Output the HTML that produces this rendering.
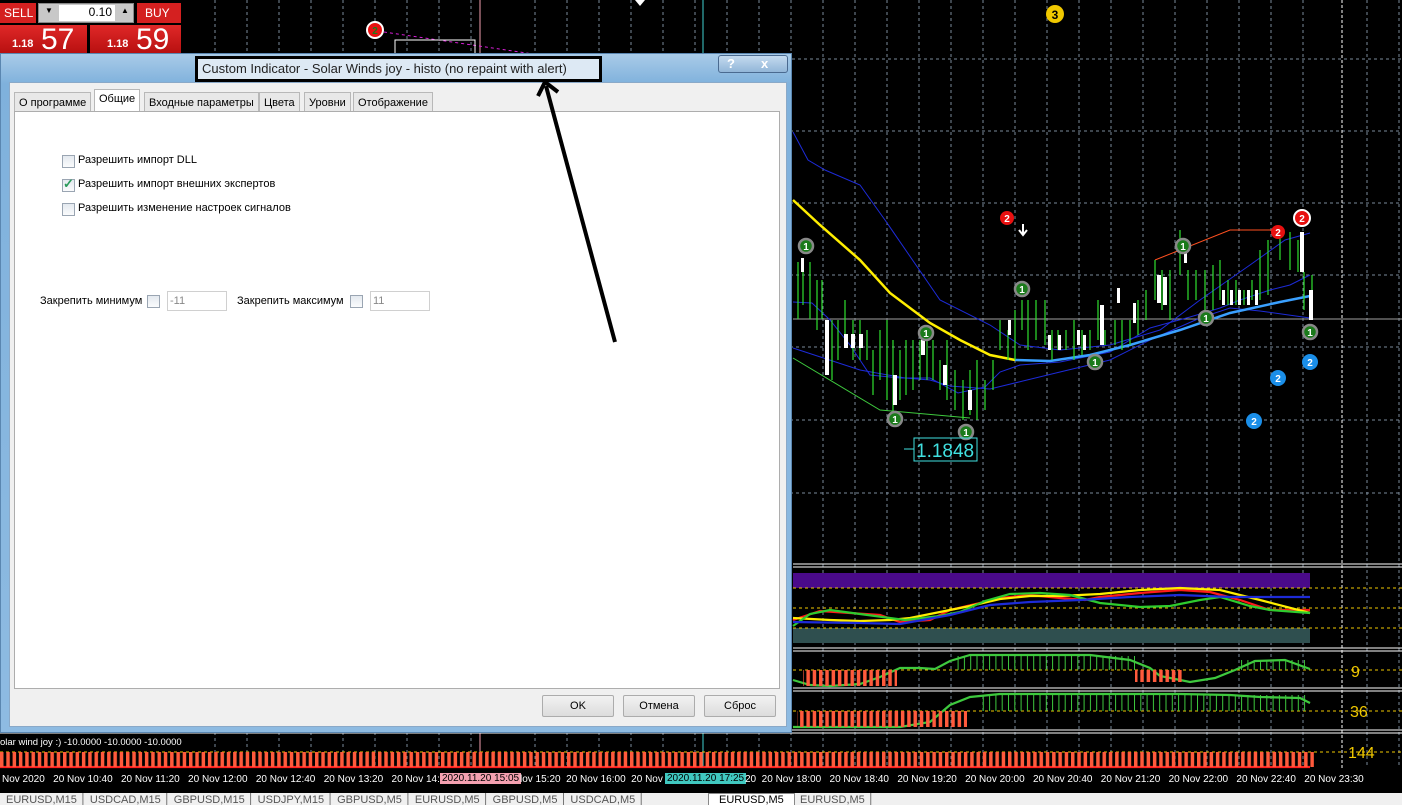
<!DOCTYPE html>
<html><head><meta charset="utf-8"><style>
*{margin:0;padding:0;box-sizing:border-box}
body{width:1402px;height:805px;background:#000;position:relative;overflow:hidden;font-family:"Liberation Sans",sans-serif}
.abs{position:absolute}
.dlg{left:0;top:53px;width:792px;height:680px;background:linear-gradient(180deg,#a9cbe8 0,#7fb1dc 30px,#8ebbe2 100%);border:1px solid #5a86b0}
.body{position:absolute;left:8px;top:28px;width:778px;height:645px;background:#f0f0f0;border:1px solid #8aa9c8}
.tab{position:absolute;top:9px;height:20px;font-size:11px;color:#000;border:1px solid #b8b8b8;border-bottom:none;background:#e8e8e8;padding:4px 4px 0 4px;white-space:nowrap}
.panel{position:absolute;left:4px;top:28px;width:766px;height:578px;background:#fff;border:1px solid #adadad}
.cb{position:absolute;width:13px;height:13px;border:1px solid #9aa5b2;background:linear-gradient(#e4e9ef,#fafbfc)}
.lbl{position:absolute;font-size:11px;color:#000;white-space:nowrap}
.inp{position:absolute;width:60px;height:20px;border:1px solid #d0d0d0;background:#fff;font-size:11px;color:#888;padding:3px 2px}
.btn{position:absolute;top:612px;width:72px;height:22px;border:1px solid #acacac;border-radius:2px;background:linear-gradient(#f2f2f2,#dcdcdc);font-size:11px;text-align:center;line-height:20px}
.tl{font-size:10px;color:#fff;white-space:nowrap}
</style></head><body>
<svg class="abs" style="left:0;top:0" width="1402" height="805">
<defs>
<pattern id="rb" width="6.3" height="20" patternUnits="userSpaceOnUse"><rect x="0" y="0" width="3.5" height="20" fill="#ff5a3c"/></pattern>
<pattern id="gb" width="6.3" height="60" patternUnits="userSpaceOnUse"><rect x="0" y="0" width="1" height="60" fill="#3ec93e"/></pattern>
</defs>
<g stroke="#7a8a9a" stroke-dasharray="3,3" stroke-width="1">
<line x1="215" y1="0" x2="215" y2="768"/><line x1="247" y1="0" x2="247" y2="768"/><line x1="279" y1="0" x2="279" y2="768"/><line x1="311" y1="0" x2="311" y2="768"/><line x1="343" y1="0" x2="343" y2="768"/><line x1="375" y1="0" x2="375" y2="768"/><line x1="407" y1="0" x2="407" y2="768"/><line x1="439" y1="0" x2="439" y2="768"/><line x1="471" y1="0" x2="471" y2="768"/><line x1="535" y1="0" x2="535" y2="768"/><line x1="567" y1="0" x2="567" y2="768"/><line x1="599" y1="0" x2="599" y2="768"/><line x1="631" y1="0" x2="631" y2="768"/><line x1="663" y1="0" x2="663" y2="768"/><line x1="695" y1="0" x2="695" y2="768"/><line x1="727" y1="0" x2="727" y2="768"/><line x1="759" y1="0" x2="759" y2="768"/><line x1="791" y1="0" x2="791" y2="768"/><line x1="823" y1="0" x2="823" y2="768"/><line x1="855" y1="0" x2="855" y2="768"/><line x1="887" y1="0" x2="887" y2="768"/><line x1="919" y1="0" x2="919" y2="768"/><line x1="951" y1="0" x2="951" y2="768"/><line x1="983" y1="0" x2="983" y2="768"/><line x1="1015" y1="0" x2="1015" y2="768"/><line x1="1047" y1="0" x2="1047" y2="768"/><line x1="1079" y1="0" x2="1079" y2="768"/><line x1="1111" y1="0" x2="1111" y2="768"/><line x1="1143" y1="0" x2="1143" y2="768"/><line x1="1175" y1="0" x2="1175" y2="768"/><line x1="1207" y1="0" x2="1207" y2="768"/><line x1="1239" y1="0" x2="1239" y2="768"/><line x1="1271" y1="0" x2="1271" y2="768"/><line x1="1303" y1="0" x2="1303" y2="768"/><line x1="1367" y1="0" x2="1367" y2="768"/><line x1="1399" y1="0" x2="1399" y2="768"/>
<line x1="180" y1="59" x2="1402" y2="59"/><line x1="790" y1="131" x2="1402" y2="131"/><line x1="790" y1="203" x2="1402" y2="203"/><line x1="790" y1="275" x2="1402" y2="275"/><line x1="790" y1="347" x2="1402" y2="347"/><line x1="790" y1="420" x2="1402" y2="420"/><line x1="790" y1="493" x2="1402" y2="493"/>
</g>
<line x1="1342" y1="0" x2="1342" y2="768" stroke="#fff" stroke-dasharray="3,2"/>
<line x1="480" y1="0" x2="480" y2="768" stroke="#f4a0b0"/>
<line x1="703" y1="0" x2="703" y2="768" stroke="#40d0d0"/>
<line x1="793" y1="319" x2="1402" y2="319" stroke="#a0a0a0"/>
<path d="M793 132 L808 160 L825 170 L860 185 L885 220 L940 300 L990 325 L1020 345 L1060 350 L1110 345 L1160 330 L1200 300 L1250 265 L1285 240 L1310 233" fill="none" stroke="#1d2bd8"/>
<path d="M793 302 L812 303 L830 320 L850 345 L870 375 L900 378 L930 378 L958 393 L985 387 L1000 372 L1020 365 L1060 362 L1110 352 L1150 328 L1190 317 L1220 308 L1240 300 L1270 290 L1290 285 L1310 275" fill="none" stroke="#1d2bd8"/>
<path d="M793 348 L860 370 L905 378 L930 380 L950 386 L990 389 L1060 372 L1110 360 L1150 340 L1200 318 L1230 308 L1260 311 L1310 318" fill="none" stroke="#1d2bd8"/>
<path d="M793 200 L820 225 L860 260 L890 293 L930 323 L960 340 L990 355 L1015 360" fill="none" stroke="#ffee00" stroke-width="2.5"/>
<path d="M1015 360 L1050 361 L1090 355 L1130 345 L1180 330 L1230 313 L1280 302 L1310 296" fill="none" stroke="#3aa0ff" stroke-width="2.5"/>
<path d="M793 358 L880 410 L970 418" fill="none" stroke="#3ec93e"/>
<path d="M1155 260 L1230 230 L1280 230" fill="none" stroke="#ff5020"/>
<g stroke="#2fe02f" fill="none" stroke-width="1.2">
<path d="M798 262V319M803 272V305M810 262V319M817 280V330M822 280V319M832 320V380M838 320V360M845 300V345M853 320V360M860 320V360M867 330V360M873 350V395M880 330V380M887 320V400M893 340V420M900 350V400M906 340V395M913 340V390M920 340V380M927 330V380M933 340V380M940 360V390M947 340V400M955 370V410M963 380V420M970 370V415M977 360V420M985 380V410M993 360V390M1000 320V350M1008 330V360M1015 310V360M1022 300V330M1028 300V350M1036 300V340M1045 300V345M1052 330V360M1058 330V350M1066 330V350M1074 320V360M1082 330V355M1090 330V350M1098 300V340M1105 330V345M1115 320V345M1122 320V350M1130 320V345M1138 300V335M1146 290V320M1155 260V300M1162 270V310M1170 270V320M1180 230V275M1188 270V300M1196 270V300M1205 270V319M1213 265V310M1220 260V300M1228 280V305M1236 280V305M1244 290V305M1252 280V300M1260 250V300M1268 240V295M1280 230V260M1290 232V270M1298 240V272M1304 272V310M1312 275V320"/>
</g>
<g fill="#fff">
<rect x="801" y="258" width="3" height="14"/><rect x="825" y="320" width="4" height="55"/><rect x="844" y="334" width="4" height="14"/><rect x="851" y="334" width="4" height="14"/><rect x="859" y="334" width="4" height="14"/><rect x="893" y="375" width="4" height="30"/><rect x="921" y="335" width="4" height="20"/><rect x="943" y="365" width="4" height="20"/><rect x="968" y="390" width="4" height="20"/><rect x="1008" y="320" width="3" height="15"/><rect x="1048" y="335" width="3" height="15"/><rect x="1058" y="335" width="3" height="15"/><rect x="1077" y="330" width="3" height="15"/><rect x="1083" y="335" width="3" height="15"/><rect x="1100" y="305" width="4" height="40"/><rect x="1117" y="288" width="3" height="15"/><rect x="1133" y="303" width="3" height="20"/><rect x="1157" y="275" width="4" height="28"/><rect x="1163" y="277" width="4" height="28"/><rect x="1184" y="250" width="3" height="13"/><rect x="1222" y="290" width="3" height="15"/><rect x="1230" y="290" width="3" height="15"/><rect x="1238" y="290" width="3" height="15"/><rect x="1247" y="290" width="3" height="15"/><rect x="1255" y="290" width="3" height="15"/><rect x="1300" y="232" width="4" height="40"/><rect x="1309" y="290" width="4" height="30"/>
</g>
<g font-family="Liberation Sans" font-size="10" font-weight="bold" text-anchor="middle">
<g fill="#1a7a1a" stroke="#888" stroke-width="2.5"><circle cx="806" cy="246" r="7"/><circle cx="1022" cy="289" r="7"/><circle cx="1183" cy="246" r="7"/><circle cx="926" cy="333" r="7"/><circle cx="1095" cy="362" r="7"/><circle cx="1206" cy="318" r="7"/><circle cx="895" cy="419" r="7"/><circle cx="966" cy="432" r="7"/><circle cx="1310" cy="332" r="7"/></g>
<g fill="#fff"><text x="806" y="250">1</text><text x="1022" y="293">1</text><text x="1183" y="250">1</text><text x="926" y="337">1</text><text x="1095" y="366">1</text><text x="1206" y="322">1</text><text x="895" y="423">1</text><text x="966" y="436">1</text><text x="1310" y="336">1</text></g>
<g fill="#1a8ee8"><circle cx="1278" cy="378" r="8"/><circle cx="1310" cy="362" r="8"/><circle cx="1254" cy="421" r="8"/></g>
<g fill="#fff"><text x="1278" y="382">2</text><text x="1310" y="366">2</text><text x="1254" y="425">2</text></g>
<g fill="#e81010"><circle cx="1007" cy="218" r="7"/><circle cx="1278" cy="232" r="7"/><circle cx="1302" cy="218" r="8" stroke="#fff" stroke-width="2"/><circle cx="375" cy="30" r="8" stroke="#fff" stroke-width="2"/></g>
<g fill="#fff"><text x="1007" y="222">2</text><text x="1278" y="236">2</text><text x="1302" y="222">2</text></g>
<text x="375" y="34" fill="#1a7a1a">2</text>
<circle cx="1055" cy="14" r="9" fill="#f0c800"/><text x="1055" y="19" fill="#000" font-size="12">3</text>
</g>
<path d="M1023 224v10M1019 230l4 5 4-5" stroke="#fff" stroke-width="2" fill="none"/>
<path d="M635 0l5 6 5-6z" fill="#fff"/>
<path d="M384 32 L540 55" stroke="#e020e0" stroke-dasharray="3,3"/>
<rect x="395" y="40" width="80" height="20" fill="none" stroke="#fff"/>
<rect x="914" y="438" width="63" height="23" fill="none" stroke="#40e0e0"/>
<line x1="904" y1="449" x2="914" y2="449" stroke="#40e0e0"/>
<text x="916" y="457" font-family="Liberation Sans" font-size="19" fill="#40e0e0">1.1848</text>
<g stroke="#fff"><line x1="793" y1="564" x2="1402" y2="564"/><line x1="793" y1="567" x2="1402" y2="567"/><line x1="793" y1="648" x2="1402" y2="648"/><line x1="793" y1="651" x2="1402" y2="651"/><line x1="793" y1="688" x2="1402" y2="688"/><line x1="793" y1="691" x2="1402" y2="691"/><line x1="0" y1="730" x2="1402" y2="730"/><line x1="0" y1="733" x2="1402" y2="733"/></g>
<rect x="793" y="573" width="517" height="15" fill="#4a0a8a"/>
<rect x="793" y="628" width="517" height="15" fill="#2f4f4f"/>
<g stroke="#f0c800" stroke-dasharray="3,3"><line x1="793" y1="588" x2="1402" y2="588"/><line x1="793" y1="608" x2="1402" y2="608"/><line x1="793" y1="628" x2="1402" y2="628"/><line x1="793" y1="670" x2="1402" y2="670"/><line x1="793" y1="711" x2="1402" y2="711"/><line x1="0" y1="752" x2="1402" y2="752"/></g>
<g fill="none" stroke-width="2.2">
<path d="M793 620 L820 611 L835 612 L880 615 L900 622 L930 620 L950 610 L980 603 L1000 598 L1030 595 L1060 598 L1085 600 L1100 597 L1140 593 L1180 590 L1210 592 L1240 600 L1270 610 L1310 610" stroke="#ff1a1a"/>
<path d="M793 618 L830 620 L860 621 L890 620 L910 618 L940 612 L970 606 L1000 599 L1030 596 L1060 596 L1100 594 L1140 590 L1180 588 L1220 590 L1260 600 L1310 613" stroke="#ffee00"/>
<path d="M793 626 L810 614 L830 610 L860 614 L905 620 L940 616 L960 612 L985 601 L1010 594 L1040 593 L1070 595 L1100 603 L1140 607 L1170 606 L1200 600 L1220 597 L1250 606 L1270 610 L1310 613" stroke="#2ecc2e"/>
<path d="M793 622 L860 623 L900 624 L950 615 L990 605 L1030 602 L1080 600 L1130 597 L1180 595 L1230 597 L1280 597 L1310 597" stroke="#1d2bd8"/>
<path d="M793 680 L810 685 L830 686 L860 684 L880 677 L900 668 L920 668 L935 669 L950 661 L970 655 L1035 655 L1090 655 L1130 660 L1150 668 L1160 676 L1190 682 L1215 678 L1235 670 L1255 661 L1285 660 L1310 669" stroke="#3ec93e"/>
<path d="M793 727 L900 727 L930 722 L950 705 L970 697 L1000 694 L1180 694 L1230 695 L1260 697 L1300 698 L1310 703" stroke="#3ec93e"/>
<path d="M0 767 L1310 767" stroke="#ff2020"/>
</g>
<rect x="803" y="670" width="94" height="16" fill="url(#rb)"/>
<rect x="1135" y="670" width="48" height="12" fill="url(#rb)"/>
<rect x="955" y="656" width="180" height="14" fill="url(#gb)"/>
<rect x="1240" y="660" width="65" height="10" fill="url(#gb)"/>
<rect x="797" y="711" width="170" height="16" fill="url(#rb)"/>
<rect x="980" y="695" width="330" height="16" fill="url(#gb)"/>
<rect x="0" y="752" width="1314" height="15" fill="url(#rb)"/>
<g font-family="Liberation Sans" font-size="16" fill="#f0c800"><text x="1351" y="677">9</text><text x="1350" y="717">36</text><text x="1348" y="758">144</text></g>
<text x="0" y="745" font-family="Liberation Sans" font-size="9.5" fill="#fff">olar wind joy :) -10.0000 -10.0000 -10.0000</text>
</svg>
<div class="abs" style="left:0;top:769px;width:1402px;height:22px;background:#000">
<div class="abs tl" style="left:2px;top:5px">Nov 2020 &nbsp;&nbsp;20 Nov 10:40 &nbsp;&nbsp;20 Nov 11:20 &nbsp;&nbsp;20 Nov 12:00 &nbsp;&nbsp;20 Nov 12:40 &nbsp;&nbsp;20 Nov 13:20 &nbsp;&nbsp;20 Nov 14:00</div>
<div class="abs tl" style="left:440px;top:4px;background:#f4a0b0;color:#000;padding:0 2px">2020.11.20 15:05</div>
<div class="abs tl" style="left:520px;top:5px">lov 15:20 &nbsp;20 Nov 16:00 &nbsp;20 Nov</div>
<div class="abs tl" style="left:665px;top:4px;background:#40c8c0;color:#000;padding:0 2px">2020.11.20 17:25</div>
<div class="abs tl" style="left:745px;top:5px">20 &nbsp;20 Nov 18:00 &nbsp;&nbsp;20 Nov 18:40 &nbsp;&nbsp;20 Nov 19:20 &nbsp;&nbsp;20 Nov 20:00 &nbsp;&nbsp;20 Nov 20:40 &nbsp;&nbsp;20 Nov 21:20 &nbsp;&nbsp;20 Nov 22:00 &nbsp;&nbsp;20 Nov 22:40 &nbsp;&nbsp;20 Nov 23:30</div>
</div>
<div class="abs" style="left:0;top:793px;width:1402px;height:12px;background:#f0f0f0;font-size:11px;color:#555;white-space:nowrap;overflow:hidden">
<span style="position:absolute;left:6px;top:1px">EURUSD,M15 │ USDCAD,M15 │ GBPUSD,M15 │ USDJPY,M15 │ GBPUSD,M5 │ EURUSD,M5 │ GBPUSD,M5 │ USDCAD,M5 │</span>
<span style="position:absolute;left:708px;top:0;background:#fff;padding:0 10px;color:#000;border:1px solid #888">EURUSD,M5</span>
<span style="position:absolute;left:800px;top:1px">EURUSD,M5 │</span>
</div>
<div class="abs" style="left:0;top:3px;width:36px;height:20px;background:#d42020;color:#fff;font-size:12px;padding:3px 4px">SELL</div>
<div class="abs" style="left:38px;top:3px;width:96px;height:20px;background:#c8c8c8;border:1px solid #888"><div class="abs" style="left:20px;top:1px;width:56px;height:16px;background:#fff;font-size:12px;text-align:right;padding-right:3px">0.10</div><div class="abs" style="left:6px;top:2px;font-size:8px">▼</div><div class="abs" style="left:82px;top:2px;font-size:8px">▲</div></div>
<div class="abs" style="left:137px;top:3px;width:44px;height:20px;background:#d42020;color:#fff;font-size:12px;padding:3px 8px">BUY</div>
<div class="abs" style="left:0;top:25px;width:87px;height:28px;background:linear-gradient(#e02828,#b81010);color:#fff"><span class="abs" style="left:12px;top:13px;font-size:11px;font-weight:bold">1.18</span><span class="abs" style="left:41px;top:-2px;font-size:30px">57</span></div>
<div class="abs" style="left:90px;top:25px;width:91px;height:28px;background:linear-gradient(#e02828,#b81010);color:#fff"><span class="abs" style="left:17px;top:13px;font-size:11px;font-weight:bold">1.18</span><span class="abs" style="left:46px;top:-2px;font-size:30px">59</span></div>
<div class="abs dlg">
<div class="abs" style="left:194px;top:2px;width:407px;height:26px;background:#000;padding:3px"><div style="background:#dde9f4;height:20px;font-size:13px;color:#222;padding:2px 4px;white-space:nowrap">Custom Indicator - Solar Winds joy - histo (no repaint with alert)</div></div>
<div class="abs" style="left:717px;top:1px;width:70px;height:18px;border:1px solid #4a6a90;border-radius:3px;background:linear-gradient(#c4daef,#92b6d8);font-size:13px;color:#fff;font-weight:bold"><span class="abs" style="left:8px;top:0">?</span><span class="abs" style="left:42px;top:0">x</span></div>
<div class="body">
<div class="tab" style="left:4px;">О программе</div>
<div class="tab" style="left:84px;top:6px;height:23px;background:#fff;padding-top:3px">Общие</div>
<div class="tab" style="left:134px;">Входные параметры</div>
<div class="tab" style="left:249px;">Цвета</div>
<div class="tab" style="left:294px;">Уровни</div>
<div class="tab" style="left:343px;">Отображение</div>
<div class="panel">
<div class="cb" style="left:47px;top:43px"></div><div class="lbl" style="left:63px;top:42px">Разрешить импорт DLL</div>
<div class="cb" style="left:47px;top:67px"><span style="position:absolute;left:0;top:-4px;font-size:13px;color:#2a9a5a;font-weight:bold">✓</span></div><div class="lbl" style="left:63px;top:66px">Разрешить импорт внешних экспертов</div>
<div class="cb" style="left:47px;top:91px"></div><div class="lbl" style="left:63px;top:90px">Разрешить изменение настроек сигналов</div>
<div class="lbl" style="left:25px;top:183px">Закрепить минимум</div><div class="cb" style="left:132px;top:183px"></div><div class="inp" style="left:152px;top:179px">-11</div>
<div class="lbl" style="left:222px;top:183px">Закрепить максимум</div><div class="cb" style="left:335px;top:183px"></div><div class="inp" style="left:355px;top:179px">11</div>
</div>
<div class="btn" style="left:532px">OK</div>
<div class="btn" style="left:613px">Отмена</div>
<div class="btn" style="left:694px">Сброс</div>
</div>
</div>
<svg class="abs" style="left:0;top:0" width="800" height="400"><path d="M615 342 L546 86" stroke="#000" stroke-width="4"/><path d="M538 96 L545 82 L558 92" stroke="#000" stroke-width="4" fill="none"/></svg>
</body></html>
